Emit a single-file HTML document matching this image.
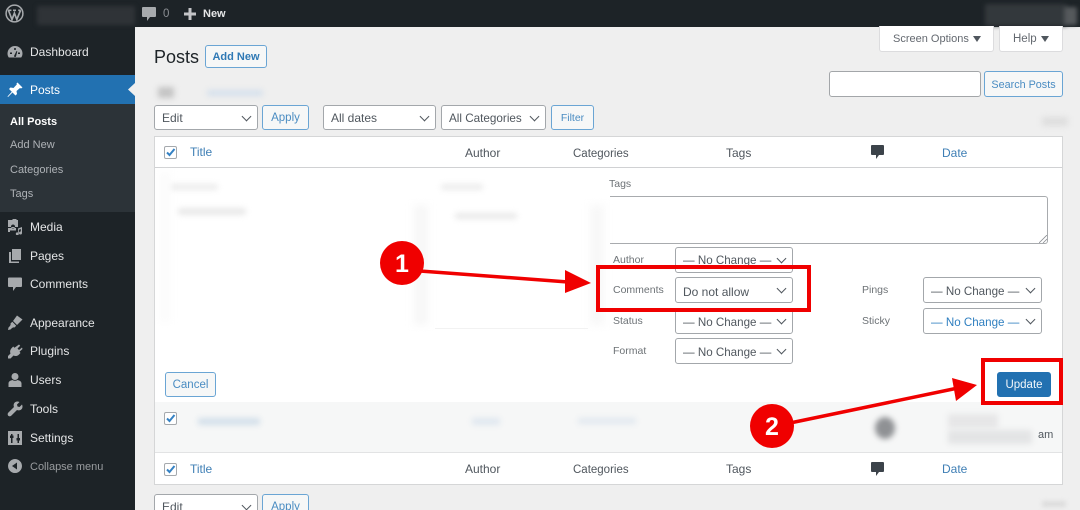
<!DOCTYPE html>
<html><head><meta charset="utf-8"><title>Posts</title>
<style>
html,body{margin:0;padding:0}
body{width:1080px;height:510px;overflow:hidden;position:relative;background:#efefef;font-family:"Liberation Sans",sans-serif;font-size:12px;color:#50575e}
div,span,svg{position:absolute}
.wrap{left:0;top:0;width:1080px;height:510px;overflow:hidden;filter:blur(.35px)}
.t{white-space:nowrap;line-height:16px}
.m{color:#e4e5e6;font-size:12px;left:30px}
.s{color:#aeb2b6;font-size:11px;left:10px}
.h{font-size:12px;color:#50575e}
.l{color:#3f7fb5}
.g{font-size:10.5px;color:#6d7276}
.sel{background:#fff;border:1px solid #a3a7ab;border-radius:3px;box-sizing:border-box;color:#50575e;font-size:12px;line-height:24px;padding-left:7px;white-space:nowrap}
.sel:after{content:"";position:absolute;right:7px;top:7px;width:6px;height:6px;border-right:1.5px solid #50575e;border-bottom:1.5px solid #50575e;transform:rotate(45deg)}
.nc{font-size:11.6px}
.btn{background:#f6f7f7;border:1px solid #6aa5d4;border-radius:3px;box-sizing:border-box;color:#4a8cc2;font-size:11.5px;text-align:center;line-height:25px;white-space:nowrap}
.cb{width:13px;height:13px;background:#fff;border:1px solid #a5a9ad;border-radius:2px;box-sizing:border-box}
.cb svg{left:0;top:0}
.bl{filter:blur(4px);border-radius:2px}
.i{left:7px;width:16px;height:16px;fill:#a7aaad}
</style></head><body>
<div class="wrap">
<!-- bars -->
<div style="left:0;top:0;width:1080px;height:27px;background:#1d2327"></div>
<div style="left:0;top:27px;width:135px;height:483px;background:#1d2327"></div>
<div style="left:0;top:75px;width:135px;height:29px;background:#2271b1"></div>
<div style="left:0;top:104px;width:135px;height:108px;background:#2c3338"></div>
<svg style="left:128px;top:83px" width="7" height="13"><path d="M7 0L0 6.500L7 13z" fill="#efefef"/></svg>

<!-- admin bar -->
<svg style="left:5px;top:4px" width="19" height="19" viewBox="0 0 19 19"><circle cx="9.500" cy="9.500" r="8.400" fill="none" stroke="#a7aaad" stroke-width="1.500"/><path d="M3.500 6.500L7 15.500L9.400 9.200L11.800 15.500L15.500 6.500M3 6.300h3.400M8 6.300h3M13.200 6.300h2.600" fill="none" stroke="#a7aaad" stroke-width="1.700"/></svg>
<div class="bl" style="left:37px;top:6px;width:98px;height:19px;background:#2f3337;filter:blur(2px)"></div>
<svg style="left:142px;top:7px" width="14" height="15" viewBox="0 0 14 15"><path d="M1 0h12a1 1 0 0 1 1 1v8a1 1 0 0 1-1 1H8l-3 4v-4H1a1 1 0 0 1-1-1V1a1 1 0 0 1 1-1z" fill="#a7aaad"/></svg>
<span class="t" style="left:163px;top:6px;color:#8c8f94;font-size:11.500px">0</span>
<svg style="left:184px;top:8px" width="12" height="12"><path d="M4.500 0h3v4.500H12v3H7.500V12h-3V7.500H0v-3h4.500z" fill="#c3c4c7"/></svg>
<span class="t" style="left:203px;top:6px;color:#e6e7e8;font-size:11px;font-weight:bold">New</span>
<div class="bl" style="left:985px;top:4px;width:82px;height:22px;background:#33383c;filter:blur(2px)"></div>
<div class="bl" style="left:1064px;top:7px;width:13px;height:18px;background:#55595c;filter:blur(2px)"></div>

<!-- sidebar -->
<svg class="i" style="top:44px" viewBox="0 0 16 16"><path d="M8 2a7.500 7.500 0 0 0-7.500 7.500c0 1.600.5 3 1.300 4h12.400c.8-1 1.300-2.400 1.300-4A7.500 7.500 0 0 0 8 2zM7.200 4h1.600v2H7.200zM3 8.500h2v1.500H3zm8 0h2v1.500h-2zM7 12l2.500-5 .8.400L9 12.500a1.100 1.100 0 0 1-2-.5z" fill-rule="evenodd"/></svg>
<span class="t m" style="top:44px">Dashboard</span>
<svg style="left:7px;top:82px" width="16" height="16" viewBox="0 0 16 16"><path d="M10.500 0.500L15.500 5.500L14 6.500L13 6L9.500 9L10 12L8.500 13.500L5.500 10.500L1 15L0.500 14.500L4.800 9.800L2 7L3.500 5.500L6.500 6L9.800 2.500L9.500 1.500z" fill="#fff"/></svg>
<span class="t m" style="top:82px;color:#fff">Posts</span>
<span class="t s" style="top:114px;color:#fff;font-weight:bold">All Posts</span>
<span class="t s" style="top:137px">Add New</span>
<span class="t s" style="top:162px">Categories</span>
<span class="t s" style="top:186px">Tags</span>
<svg class="i" style="top:219px" viewBox="0 0 16 16"><path d="M1 1h4l1-1h3l1 1h1v7H1zM6 5.500a2 2 0 1 0 .01 0zM11 9.500l4-1.500v6a1.500 1.500 0 1 1-1.200-1.500V10l-2 .8v4a1.500 1.500 0 1 1-.8-1.300zM1 9h8v2.500H3V13H1z" fill-rule="evenodd"/></svg>
<span class="t m" style="top:219px">Media</span>
<svg class="i" style="top:248px" viewBox="0 0 16 16"><path d="M5 1h9v11H5zM2 4h2v9.500h8V15H2z"/></svg>
<span class="t m" style="top:248px">Pages</span>
<svg class="i" style="top:276px" viewBox="0 0 16 16"><path d="M2 1.500h12a1 1 0 0 1 1 1v7.500a1 1 0 0 1-1 1H9l-3 4v-4H2a1 1 0 0 1-1-1V2.500a1 1 0 0 1 1-1z"/></svg>
<span class="t m" style="top:276px">Comments</span>
<svg class="i" style="top:315px" viewBox="0 0 16 16"><path d="M10 0.500L15.500 4.500L10 10L6 6zM5.300 6.800L9.200 10.800L7.500 12.500C6 12 5 13 3.500 14.500L1 15L1.500 12.500C3 11 4 10 3.500 8.500z"/></svg>
<span class="t m" style="top:315px">Appearance</span>
<svg class="i" style="top:343px" viewBox="0 0 16 16"><path d="M12 1.500L13.200 2.700L10.500 5.500L12 7L15 4.500L15.500 6L12.500 8.800L13.500 10L11.500 12C10 13.200 8 13.300 6.500 12.500L3.500 15.500L1 15.500L1 13L3.500 10.500C2.800 9 3 7 4.300 5.500L6.200 3.500L7.500 4.700z"/></svg>
<span class="t m" style="top:343px">Plugins</span>
<svg class="i" style="top:372px" viewBox="0 0 16 16"><circle cx="8" cy="4.500" r="3.500"/><path d="M1.500 15v-3.500C1.500 9 4 8.500 5.500 8c1.500 1 3.500 1 5 0 1.500.5 4 1 4 3.500V15z"/></svg>
<span class="t m" style="top:372px">Users</span>
<svg class="i" style="top:401px" viewBox="0 0 16 16"><path d="M15 3.500L12.500 6L10.500 5.500L10 3.500L12.500 1C10.500 0 8 .5 7 2.500C6.500 3.700 6.500 5 7 6L1.200 11.800C.5 12.500.5 14 1.200 14.800C2 15.500 3.500 15.500 4.200 14.800L10 9C11 9.500 12.300 9.500 13.500 9C15.500 8 16 5.500 15 3.500z"/></svg>
<span class="t m" style="top:401px">Tools</span>
<svg class="i" style="top:430px" viewBox="0 0 16 16"><path d="M1 1h14v14H1zM4 4v1.500H3V8h1v5h1.500V8h1V5.500h-1V4zM10.500 13h1.500V10.500h1V8h-1V4h-1.500v4h-1v2.500h1z" fill-rule="evenodd"/></svg>
<span class="t m" style="top:430px">Settings</span>
<svg class="i" style="top:458px" viewBox="0 0 16 16"><path d="M8 1a7 7 0 1 0 .01 0zM10 4.500v7L5 8z" fill-rule="evenodd"/></svg>
<span class="t" style="left:30px;top:459px;color:#999c9f;font-size:11px">Collapse menu</span>

<!-- top -->
<div style="left:879px;top:26px;width:115px;height:26px;background:#fff;border:1px solid #dcdcde;border-top:0;border-radius:0 0 3px 3px;box-sizing:border-box"></div>
<span class="t" style="left:893px;top:31px;font-size:11px;color:#646970">Screen Options</span>
<svg style="left:973px;top:36px" width="8" height="6"><path d="M0 0h8L4 6z" fill="#50575e"/></svg>
<div style="left:999px;top:26px;width:64px;height:26px;background:#fff;border:1px solid #dcdcde;border-top:0;border-radius:0 0 3px 3px;box-sizing:border-box"></div>
<span class="t" style="left:1013px;top:31px;font-size:11.500px;color:#646970">Help</span>
<svg style="left:1041px;top:36px" width="8" height="6"><path d="M0 0h8L4 6z" fill="#50575e"/></svg>

<span class="t" style="left:154px;top:44px;font-size:18px;line-height:26px;color:#1d2327">Posts</span>
<div class="btn" style="left:205px;top:45px;width:62px;height:23px;font-weight:bold;font-size:11px;line-height:23px;color:#2f79b5">Add New</div>

<div class="bl" style="left:158px;top:87px;width:16px;height:11px;background:#c4c4c4;filter:blur(3px)"></div>
<div class="bl" style="left:207px;top:90px;width:56px;height:6px;background:#d5e0ec;filter:blur(3px)"></div>

<div style="left:829px;top:71px;width:152px;height:26px;background:#fff;border:1px solid #a3a6a9;border-radius:3px;box-sizing:border-box"></div>
<div class="btn" style="left:984px;top:71px;width:79px;height:26px;line-height:27px;font-size:10.800px">Search Posts</div>
<div class="bl" style="left:1042px;top:117px;width:26px;height:9px;background:#dedede;filter:blur(3px)"></div>

<div class="sel" style="left:154px;top:105px;width:104px;height:25px">Edit</div>
<div class="btn" style="left:262px;top:105px;width:47px;height:25px">Apply</div>
<div class="sel" style="left:323px;top:105px;width:113px;height:25px">All dates</div>
<div class="sel" style="left:441px;top:105px;width:105px;height:25px;font-size:11.700px;line-height:26px">All Categories</div>
<div class="btn" style="left:551px;top:105px;width:43px;height:25px;font-size:10.500px">Filter</div>

<!-- table -->
<div style="left:154px;top:136px;width:909px;height:349px;background:#fff;border:1px solid #d5d6d7;box-sizing:border-box"></div>
<div style="left:155px;top:167px;width:907px;height:1px;background:#d0d1d3"></div>
<div class="cb" style="left:164px;top:146px"><svg width="11" height="11" viewBox="0 0 11 11"><path d="M2 5.500L4.500 8L9.500 2" fill="none" stroke="#3582c4" stroke-width="2"/></svg></div>
<span class="t h l" style="left:190px;top:144px">Title</span>
<span class="t h" style="left:465px;top:145px">Author</span>
<span class="t h" style="left:573px;top:146px;font-size:11.500px">Categories</span>
<span class="t h" style="left:726px;top:145px">Tags</span>
<svg style="left:871px;top:145px" width="13" height="14" viewBox="0 0 13 14"><path d="M1 0h11a1 1 0 0 1 1 1v8a1 1 0 0 1-1 1H8l-3 4v-4H1a1 1 0 0 1-1-1V1a1 1 0 0 1 1-1z" fill="#3c434a"/></svg>
<span class="t h l" style="left:942px;top:145px">Date</span>

<!-- inline edit -->
<div style="left:610px;top:196px;width:438px;height:48px;background:#fff;border:1px solid #a8abae;border-left:0;border-radius:0 3px 3px 0;box-sizing:border-box"></div>
<svg style="left:1039px;top:235px" width="8" height="8"><path d="M0 8L8 0M4 8L8 4" stroke="#8c8f94" stroke-width=".8"/></svg>
<span class="t g" style="left:609px;top:176px">Tags</span>
<div class="bl" style="left:170px;top:184px;width:48px;height:6px;background:#ececec;filter:blur(3px)"></div>
<div class="bl" style="left:178px;top:208px;width:68px;height:7px;background:#e9e9e9;filter:blur(3px)"></div>
<div class="bl" style="left:161px;top:172px;width:8px;height:150px;background:#fafafa"></div>
<div class="bl" style="left:441px;top:184px;width:42px;height:6px;background:#ececec;filter:blur(3px)"></div>
<div class="bl" style="left:455px;top:213px;width:62px;height:6px;background:#e9e9e9;filter:blur(3px)"></div>
<div class="bl" style="left:414px;top:205px;width:14px;height:120px;background:#f7f7f7"></div>
<div class="bl" style="left:590px;top:205px;width:14px;height:120px;background:#f8f8f8"></div>
<div style="left:435px;top:328px;width:153px;height:1px;background:#f2f2f2"></div>

<span class="t g" style="left:613px;top:252px">Author</span>
<span class="t g" style="left:613px;top:282px">Comments</span>
<span class="t g" style="left:613px;top:313px">Status</span>
<span class="t g" style="left:613px;top:343px">Format</span>
<span class="t g" style="left:862px;top:282px">Pings</span>
<span class="t g" style="left:862px;top:313px">Sticky</span>
<div class="sel nc" style="left:675px;top:247px;width:118px;height:26px;line-height:26px">— No Change —</div>
<div class="sel" style="left:675px;top:277px;width:118px;height:26px;line-height:28px">Do not allow</div>
<div class="sel nc" style="left:675px;top:308px;width:118px;height:26px;line-height:28px">— No Change —</div>
<div class="sel nc" style="left:675px;top:338px;width:118px;height:26px;line-height:28px">— No Change —</div>
<div class="sel nc" style="left:923px;top:277px;width:119px;height:26px;line-height:28px">— No Change —</div>
<div class="sel nc" style="left:923px;top:308px;width:119px;height:26px;line-height:28px;color:#2f7fc0">— No Change —</div>

<div class="btn" style="left:165px;top:372px;width:51px;height:25px">Cancel</div>
<div class="btn" style="left:997px;top:372px;width:54px;height:25px;background:#2271b1;border-color:#2271b1;color:#f2f6fa">Update</div>

<!-- row -->
<div style="left:155px;top:402px;width:907px;height:50px;background:#f6f7f7"></div>
<div style="left:155px;top:452px;width:907px;height:1px;background:#e2e3e4"></div>
<div class="cb" style="left:164px;top:412px"><svg width="11" height="11" viewBox="0 0 11 11"><path d="M2 5.500L4.500 8L9.500 2" fill="none" stroke="#3582c4" stroke-width="2"/></svg></div>
<div class="bl" style="left:198px;top:418px;width:62px;height:7px;background:#d3dfea;filter:blur(3px)"></div>
<div class="bl" style="left:472px;top:418px;width:28px;height:7px;background:#dfe7ef;filter:blur(3px)"></div>
<div class="bl" style="left:578px;top:418px;width:58px;height:6px;background:#e1e8ef;filter:blur(3px)"></div>
<div class="bl" style="left:875px;top:417px;width:20px;height:22px;border-radius:50%;background:#8f9194;filter:blur(3px)"></div>
<div class="bl" style="left:948px;top:414px;width:50px;height:14px;background:#e6e6e7;filter:blur(3px)"></div>
<div class="bl" style="left:948px;top:430px;width:84px;height:14px;background:#e3e4e5;filter:blur(3px)"></div>
<span class="t" style="left:1038px;top:427px;font-size:11px;color:#50575e">am</span>

<!-- tfoot -->
<div class="cb" style="left:164px;top:463px"><svg width="11" height="11" viewBox="0 0 11 11"><path d="M2 5.500L4.500 8L9.500 2" fill="none" stroke="#3582c4" stroke-width="2"/></svg></div>
<span class="t h l" style="left:190px;top:461px">Title</span>
<span class="t h" style="left:465px;top:461px">Author</span>
<span class="t h" style="left:573px;top:462px;font-size:11.500px">Categories</span>
<span class="t h" style="left:726px;top:461px">Tags</span>
<svg style="left:871px;top:462px" width="13" height="14" viewBox="0 0 13 14"><path d="M1 0h11a1 1 0 0 1 1 1v8a1 1 0 0 1-1 1H8l-3 4v-4H1a1 1 0 0 1-1-1V1a1 1 0 0 1 1-1z" fill="#3c434a"/></svg>
<span class="t h l" style="left:942px;top:461px">Date</span>

<div class="sel" style="left:154px;top:494px;width:104px;height:25px">Edit</div>
<div class="btn" style="left:262px;top:494px;width:47px;height:25px">Apply</div>
<div class="bl" style="left:1042px;top:501px;width:24px;height:6px;background:#dcdcdc;filter:blur(2px)"></div>
</div>

<!-- annotations -->
<svg style="left:0;top:0" width="1080" height="510" viewBox="0 0 1080 510">
<rect x="598" y="267" width="211" height="43" fill="none" stroke="#f00000" stroke-width="4"/>
<rect x="983" y="360" width="78" height="43" fill="none" stroke="#f00000" stroke-width="4"/>
<path d="M420 271L568 282" stroke="#f00000" stroke-width="3.500"/>
<path d="M565 270L591 283L565 293z" fill="#f00000"/>
<path d="M790 423L958 388" stroke="#f00000" stroke-width="3.500"/>
<path d="M952 378L977 385L956 401z" fill="#f00000"/>
<circle cx="402" cy="263" r="22" fill="#f00000"/>
<circle cx="772" cy="426" r="22" fill="#f00000"/>
<text x="402" y="272" text-anchor="middle" font-family="Liberation Sans" font-weight="bold" font-size="25" fill="#fff">1</text>
<text x="772" y="435" text-anchor="middle" font-family="Liberation Sans" font-weight="bold" font-size="25" fill="#fff">2</text>
</svg>
</body></html>
